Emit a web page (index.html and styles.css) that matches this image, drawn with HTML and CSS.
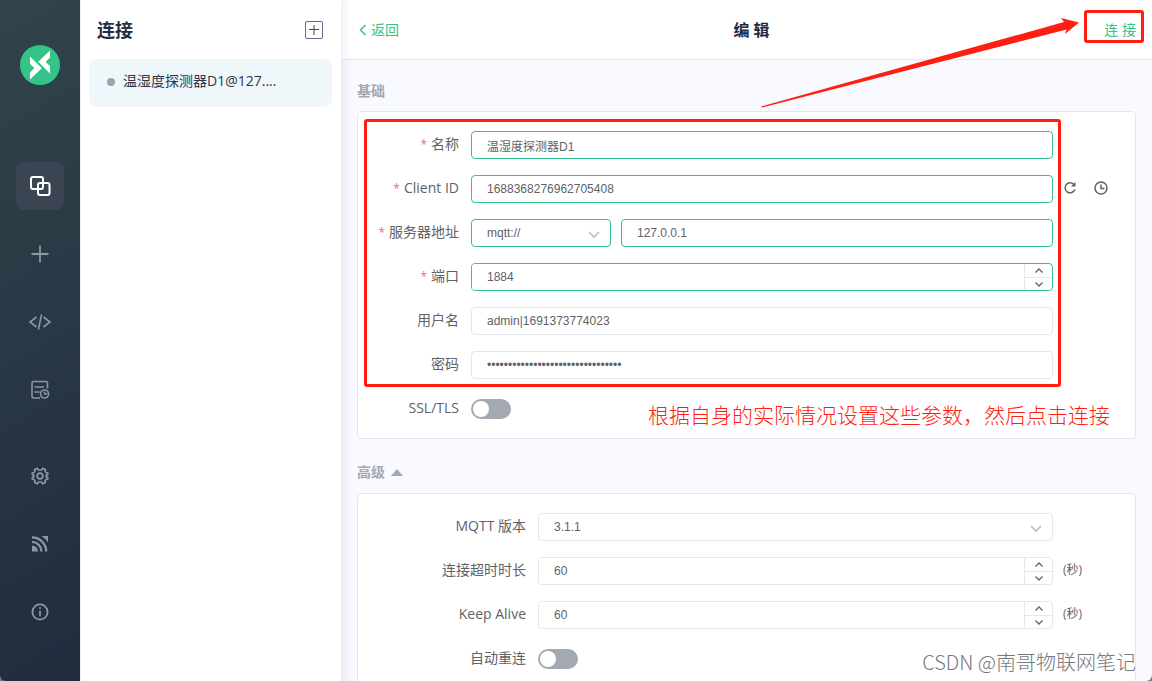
FILE: index.html
```html
<!DOCTYPE html>
<html lang="zh-CN">
<head>
<meta charset="utf-8">
<meta name="viewport" content="width=device-width, initial-scale=1">
<title>编辑连接</title>
<link rel="stylesheet" href="styles.css">
</head>
<body>
<div class="app">
  <nav class="rail" aria-label="主导航">
    <svg class="logo" viewBox="0 0 40 40" aria-hidden="true">
      <circle cx="20" cy="20" r="20" fill="#34c388"/>
      <path d="M10 11.500 21.800 23.200 10 34.500V27.500L14.500 23 10 19Z" fill="#fff"/>
      <path d="M30 5.500 18.200 16.800 30 28.500V21L25.500 17 30 12.500Z" fill="#fff"/>
    </svg>
    <div class="rail-group">
      <button class="rail-btn active" type="button" aria-label="连接">
        <svg viewBox="0 0 24 24"><g stroke-width="2"><rect x="3" y="3" width="12" height="12" rx="2"/><rect x="10" y="9" width="11.500" height="12" rx="2"/></g></svg>
      </button>
      <button class="rail-btn" type="button" aria-label="新建">
        <svg viewBox="0 0 24 24"><path stroke-width="1.800" d="M12 3.500v17M3.500 12h17"/></svg>
      </button>
      <button class="rail-btn" type="button" aria-label="脚本">
        <svg viewBox="0 0 24 24"><path stroke-width="1.600" d="M8.500 7 2 12l6.500 5M15.500 7l6.500 5-6.500 5M13.500 4.500l-3 15"/></svg>
      </button>
      <button class="rail-btn" type="button" aria-label="日志">
        <svg viewBox="0 0 24 24"><path stroke-width="1.600" d="M19.500 10.500V5a1.500 1.500 0 0 0-1.500-1.500H5.500A1.500 1.500 0 0 0 4 5v13.500A1.500 1.500 0 0 0 5.500 20H12M6.500 9h9.500M6.500 14h5"/><circle cx="16.500" cy="16" r="4" stroke-width="1.600"/><path stroke-width="1.300" d="M16.500 13.500V16H19"/></svg>
      </button>
    </div>
    <div class="rail-group">
      <button class="rail-btn" type="button" aria-label="设置">
        <svg viewBox="0 0 24 24"><circle cx="12" cy="12" r="2.800" stroke-width="1.700"/><path stroke-width="1.700" stroke-linejoin="round" d="M10.300 6 9.200 4.300 6.500 5.500 6.900 7.500 5.900 8.500 4.300 8.800 4.300 10.500 5.800 11.300V12.700L4.300 13.500V15.200L5.900 15.500 6.900 16.500 6.500 18.500 9.200 19.700 10.300 18H13.700L14.800 19.700 17.500 18.500 17.100 16.500 18.100 15.500 19.700 15.200V13.500L18.200 12.700V11.300L19.700 10.500V8.800L18.100 8.500 17.100 7.500 17.500 5.500 14.800 4.300 13.700 6Z"/></svg>
      </button>
      <button class="rail-btn" type="button" aria-label="订阅">
        <svg viewBox="0 0 24 24"><path class="solid" d="M4 13.500a6 6 0 0 1 6 6H4ZM13.500 4H20v6.500A18 18 0 0 0 13.500 4Z"/><path stroke-width="2.200" d="M4 10a9.500 9.500 0 0 1 9.500 9.500M4 5.300A14.200 14.200 0 0 1 18.200 19.500"/></svg>
      </button>
      <button class="rail-btn" type="button" aria-label="关于">
        <svg viewBox="0 0 24 24"><circle cx="12" cy="12" r="7.600" stroke-width="1.800"/><path stroke-width="1.700" d="M12 10.500v6M12 7.300v1.700"/></svg>
      </button>
    </div>
  </nav>

  <aside class="connections">
    <header class="connections-head">
      <h1>连接</h1>
      <button class="add-btn" type="button" aria-label="新建连接">
        <svg viewBox="0 0 20 20"><rect x="1.500" y="1.500" width="17" height="17" rx="1.500" stroke="#6f6488"/><path d="M10 5v10M5 9.500h10" stroke="#294b70"/></svg>
      </button>
    </header>
    <button class="connection" type="button"><span class="dot"></span><span class="connection-name">温湿度探测器D1@127....</span></button>
  </aside>

  <main class="main">
    <header class="topbar">
      <a class="back" href="#"><svg viewBox="0 0 8 12" aria-hidden="true"><path d="M6.500 1 1.500 6l5 5"/></svg>返回</a>
      <h2>编 辑</h2>
      <button class="connect" type="button">连 接</button>
      <svg class="arrow" viewBox="0 0 320 92" aria-hidden="true"><path d="M1 91.500 304 7 301 3 319 7.500 305 19 306.500 14.500 2 92.500Z"/></svg>
    </header>

    <form class="content">
      <h3 class="section-title">基础</h3>
      <section class="card basic">
        <div class="rows marked">
          <div class="row">
            <label class="label required" for="name">名称</label>
            <input class="field valid" id="name" type="text" value="温湿度探测器D1">
          </div>
          <div class="row">
            <label class="label required" for="client">Client ID</label>
            <input class="field valid" id="client" type="text" value="1688368276962705408">
            <div class="tail">
              <button class="icon-btn" type="button" aria-label="刷新"><svg viewBox="0 0 14 14"><path d="M11.800 8.500A5 5 0 1 1 10.800 3.500"/><path class="fill" d="M12.500 1v4.500H8Z"/></svg></button>
              <button class="icon-btn" type="button" aria-label="时间戳"><svg viewBox="0 0 14 14"><circle cx="7" cy="7" r="6"/><path d="M7 3.500V7.500h3.500"/></svg></button>
            </div>
          </div>
          <div class="row">
            <label class="label required" for="host">服务器地址</label>
            <div class="host">
              <div class="select-wrap">
                <select class="field valid" aria-label="协议"><option>mqtt://</option></select>
                <svg viewBox="0 0 12 8"><path d="m1 1 5 5 5-5"/></svg>
              </div>
              <input class="field valid" id="host" type="text" value="127.0.0.1">
            </div>
          </div>
          <div class="row">
            <label class="label required" for="port">端口</label>
            <div class="number valid">
              <input id="port" type="number" value="1884">
              <div class="steps">
                <button type="button" aria-label="增加"><svg viewBox="0 0 8 5"><path d="m.5 4.500 3.500-3.500 3.500 3.500"/></svg></button>
                <button type="button" aria-label="减少"><svg viewBox="0 0 8 5"><path d="m.5.5 3.500 3.500L7.500.5"/></svg></button>
              </div>
            </div>
          </div>
          <div class="row">
            <label class="label" for="user">用户名</label>
            <input class="field" id="user" type="text" value="admin|1691373774023">
          </div>
          <div class="row">
            <label class="label" for="password">密码</label>
            <input class="field" id="password" type="password" value="00000000000000000000000000000000">
          </div>
        </div>
        <div class="row">
          <label class="label" for="ssl">SSL/TLS</label>
          <input class="switch" id="ssl" type="checkbox" role="switch">
        </div>
        <p class="note">根据自身的实际情况设置这些参数，然后点击连接</p>
      </section>

      <h3 class="section-title advanced-title">高级<svg viewBox="0 0 12 7" aria-hidden="true"><path d="M6 0 12 7H0Z"/></svg></h3>
      <section class="card advanced">
        <div class="rows">
          <div class="row">
            <label class="label" for="version">MQTT 版本</label>
            <div class="select-wrap">
              <select class="field" id="version"><option>3.1.1</option></select>
              <svg viewBox="0 0 12 8"><path d="m1 1 5 5 5-5"/></svg>
            </div>
          </div>
          <div class="row">
            <label class="label" for="timeout">连接超时时长</label>
            <div class="number">
              <input id="timeout" type="number" value="60">
              <div class="steps">
                <button type="button" aria-label="增加"><svg viewBox="0 0 8 5"><path d="m.5 4.500 3.500-3.500 3.500 3.500"/></svg></button>
                <button type="button" aria-label="减少"><svg viewBox="0 0 8 5"><path d="m.5.5 3.500 3.500L7.500.5"/></svg></button>
              </div>
            </div>
            <span class="tail">(秒)</span>
          </div>
          <div class="row">
            <label class="label" for="alive">Keep Alive</label>
            <div class="number">
              <input id="alive" type="number" value="60">
              <div class="steps">
                <button type="button" aria-label="增加"><svg viewBox="0 0 8 5"><path d="m.5 4.500 3.500-3.500 3.500 3.500"/></svg></button>
                <button type="button" aria-label="减少"><svg viewBox="0 0 8 5"><path d="m.5.5 3.500 3.500L7.500.5"/></svg></button>
              </div>
            </div>
            <span class="tail">(秒)</span>
          </div>
          <div class="row">
            <label class="label" for="reconnect">自动重连</label>
            <input class="switch" id="reconnect" type="checkbox" role="switch">
          </div>
        </div>
      </section>
    </form>
    <p class="watermark">CSDN @南哥物联网笔记</p>
  </main>
</div>
</body>
</html>
```
FILE: styles.css
```css
:root {
  --green: #34c388;
  --line: #e4e7f0;
  --text: #606266;
  --muted: #a2a9b0;
  --red: #ff1e10;
  --ui: "Open Sans", "Noto Sans CJK SC", sans-serif;
  --input: "Liberation Sans", "Noto Sans CJK SC", sans-serif;
}

* { box-sizing: border-box; }

body {
  margin: 0;
  overflow: hidden;
  background: #77787c;
  color: var(--text);
  font: 14px/20px var(--ui);
}

h1, h2, h3, p { margin: 0; }

button {
  padding: 0;
  border: 0;
  background: none;
  color: inherit;
  font: inherit;
}

svg { display: block; fill: none; stroke: currentColor; }

.app {
  display: flex;
  height: 100vh;
  overflow: hidden;
  border-radius: 0 0 6px 6px;
}

/* Icon rail */
.rail {
  display: flex;
  flex: 0 0 80px;
  flex-direction: column;
  align-items: center;
  padding-top: 45px;
  background: linear-gradient(150deg, #30444a 0%, #293845 50%, #212b3d 100%);
}

.logo { width: 40px; height: 40px; margin-bottom: 77px; stroke: none; }

.rail-group {
  display: flex;
  flex-direction: column;
  gap: 20px;
  margin-bottom: 38px;
}

.rail-btn {
  display: grid;
  width: 48px;
  height: 48px;
  place-items: center;
  border-radius: 8px;
  color: #8b98a2;
}

.rail-btn.active { background: #3a4452; color: #fff; }
.rail-btn svg { width: 24px; height: 24px; }
.rail-btn .solid { fill: currentColor; stroke: none; }

/* Connection list */
.connections {
  flex: 0 0 261px;
  padding: 0 9px 0 8px;
  border-left: 1px solid #ecedf2;
  background: #fff;
}

.connections-head {
  display: flex;
  height: 59px;
  align-items: center;
  justify-content: space-between;
  padding: 0 8px;
}

.connections-head h1 { color: #262b3f; font-size: 18px; line-height: 24px; }
.add-btn svg { width: 20px; height: 20px; }

.connection {
  display: flex;
  width: 100%;
  height: 48px;
  align-items: center;
  gap: 8px;
  padding: 0 18px 4px;
  border-radius: 8px;
  background: #eff7fb;
  color: #303443;
  white-space: nowrap;
}

.dot { width: 8px; height: 8px; margin-top: 2px; border-radius: 50%; background: #9da3b3; }

/* Editor */
.main {
  position: relative;
  display: flex;
  flex: 1;
  flex-direction: column;
  min-width: 0;
  background: #f9faff;
  box-shadow: inset 12px 0 12px -10px #dfe3f0;
}

.topbar {
  position: relative;
  display: grid;
  flex: 0 0 60px;
  grid-template-columns: 1fr auto 1fr;
  align-items: center;
  padding: 0 16px 0 18px;
  border-bottom: 1px solid var(--line);
  background: #fff;
  box-shadow: inset 12px 0 12px -10px #e8ebf4;
}

.back {
  display: flex;
  align-items: center;
  gap: 4px;
  color: var(--green);
  text-decoration: none;
}

.back svg { width: 8px; height: 12px; stroke-width: 1.5; }
.topbar h2 { padding-left: 8px; color: #262b3f; font-size: 16px; line-height: 24px; }
.connect { position: relative; justify-self: end; color: var(--green); }

.connect::after {
  position: absolute;
  inset: -10px -8px -3px -20px;
  border: 3px solid var(--red);
  border-radius: 3px;
  content: "";
}

.arrow {
  position: absolute;
  z-index: 2;
  top: 15px;
  right: 72px;
  width: 320px;
  height: 92px;
  overflow: visible;
  fill: var(--red);
  stroke: none;
}

.content {
  flex: 1;
  overflow: auto;
  padding: 21px 16px 40px;
  scrollbar-width: none;
}

.section-title {
  display: flex;
  align-items: center;
  gap: 6px;
  margin-bottom: 10px;
  color: var(--muted);
  font-size: 14px;
  line-height: 20px;
}

.section-title svg { width: 12px; height: 7px; fill: currentColor; stroke: none; }
.advanced-title { margin: 23px 0 11px; }

.card {
  position: relative;
  padding: 19px 0;
  border: 1px solid var(--line);
  border-radius: 4px;
  background: #fff;
}

.basic { --label: 101px; padding-bottom: 15px; }
.advanced { --label: 168px; }

.rows { display: grid; gap: 16px; }
.rows + .row { margin-top: 16px; }
.marked { position: relative; }

.marked::after {
  position: absolute;
  inset: -12px 74px -8px 6px;
  border: 3px solid var(--red);
  border-radius: 3px;
  content: "";
  pointer-events: none;
}

.row {
  display: grid;
  grid-template-columns: var(--label) 1fr 72px;
  align-items: center;
  min-height: 28px;
}

.row > :nth-child(2) { margin: 0 10px 0 12px; }

.label { padding-bottom: 2px; text-align: right; white-space: nowrap; }
.required::before { margin-right: 4px; color: #f56c6c; font-size: 12px; content: "*"; }

.field, .number {
  width: auto;
  min-width: 0;
  height: 28px;
  border: 1px solid var(--line);
  border-radius: 4px;
  background: #fff;
}

.field, .number input {
  padding: 0 15px;
  color: var(--text);
  font: 12px/18px var(--input);
  outline: 0;
}

.field.valid, .number.valid { border-color: var(--green); }

.host { display: grid; grid-template-columns: 140px 1fr; gap: 10px; }
.select-wrap { position: relative; }
.select-wrap select { width: 100%; appearance: none; }

.select-wrap svg {
  position: absolute;
  top: 12px;
  right: 11px;
  width: 12px;
  height: 8px;
  color: #b8bcc6;
  stroke-width: 1.6;
  pointer-events: none;
}

.number { display: flex; overflow: hidden; }

.number input {
  flex: 1;
  min-width: 0;
  border: 0;
  appearance: textfield;
}

.number input::-webkit-inner-spin-button { display: none; }

.steps {
  display: grid;
  width: 28px;
  grid-template-rows: 1fr 1fr;
  border-left: 1px solid var(--line);
}

.steps button { display: grid; place-items: center; }
.steps button + button { border-top: 1px solid var(--line); }
.steps svg { width: 8px; height: 5px; stroke-width: 1.3; }

.tail { display: flex; gap: 17px; padding-bottom: 2px; font-size: 12px; }
.icon-btn svg { width: 14px; height: 14px; stroke-width: 1.5; }
.icon-btn .fill { fill: currentColor; stroke: none; }

.switch {
  width: 40px;
  height: 20px;
  padding: 2px;
  border-radius: 10px;
  background: var(--muted);
  appearance: none;
}

.switch::before {
  display: block;
  width: 16px;
  height: 16px;
  border-radius: 50%;
  background: #fff;
  content: "";
}

.note {
  position: absolute;
  right: 25px;
  bottom: 10px;
  color: var(--red);
  font: 300 21px/28px "Noto Sans CJK SC", sans-serif;
  white-space: nowrap;
}

.watermark {
  position: absolute;
  right: 16px;
  bottom: 5px;
  color: #77787c;
  font: 300 20px/28px "Noto Sans CJK SC", sans-serif;
  text-shadow: 1px 1px 0 #fff;
  white-space: nowrap;
}
```
